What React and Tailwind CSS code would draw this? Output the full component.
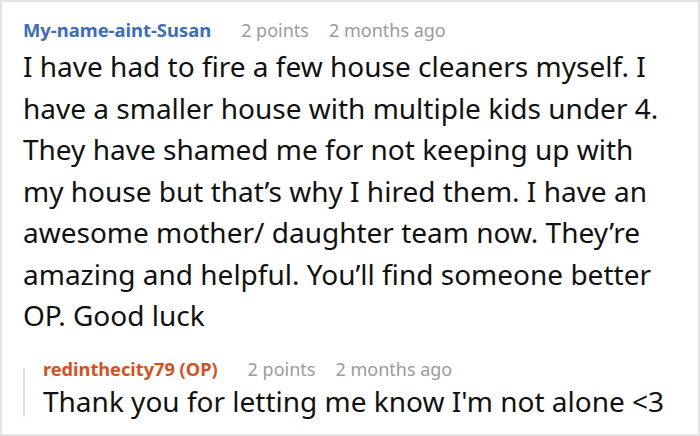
export default function App() {
  return (
    <div className="w-[700px] h-[436px] overflow-hidden bg-white border-2 border-[#e4e4e4] pl-[21px] pr-4 pt-4 font-['Noto_Sans',sans-serif]">
      <div className="flex items-baseline leading-[24px]">
        <span className="text-[18.4px] font-bold text-[#3b6cbf] mr-[30px]">My-name-aint-Susan</span>
        <span className="text-[18px] text-[#9b9b9b] mr-[20px]">2 points</span>
        <span className="text-[18px] text-[#9b9b9b]">2 months ago</span>
      </div>
      <p className="mt-[4px] text-[28px] leading-[41.5px] text-[#111] w-[650px]">
        I have had to fire a few house cleaners myself. I have a smaller house with multiple kids under 4. They have shamed me for not keeping up with my house but that’s why I hired them. I have an awesome mother/ daughter team now. They’re amazing and helpful. You’ll find someone better OP. Good luck
      </p>
      <div className="flex mt-5">
        <div className="w-[2px] bg-[#e2e2e2] mt-[11px] mb-[5px]" />
        <div className="pl-[18px]">
          <div className="flex items-baseline leading-[24px]">
            <span className="text-[18.2px] font-bold text-[#d4521d] mr-[30px]">redinthecity79 (OP)</span>
            <span className="text-[18px] text-[#9b9b9b] mr-[20px]">2 points</span>
            <span className="text-[18px] text-[#9b9b9b]">2 months ago</span>
          </div>
          <p className="text-[28px] leading-[41.5px] text-[#111]">Thank you for letting me know I'm not alone &lt;3</p>
        </div>
      </div>
    </div>
  );
}
